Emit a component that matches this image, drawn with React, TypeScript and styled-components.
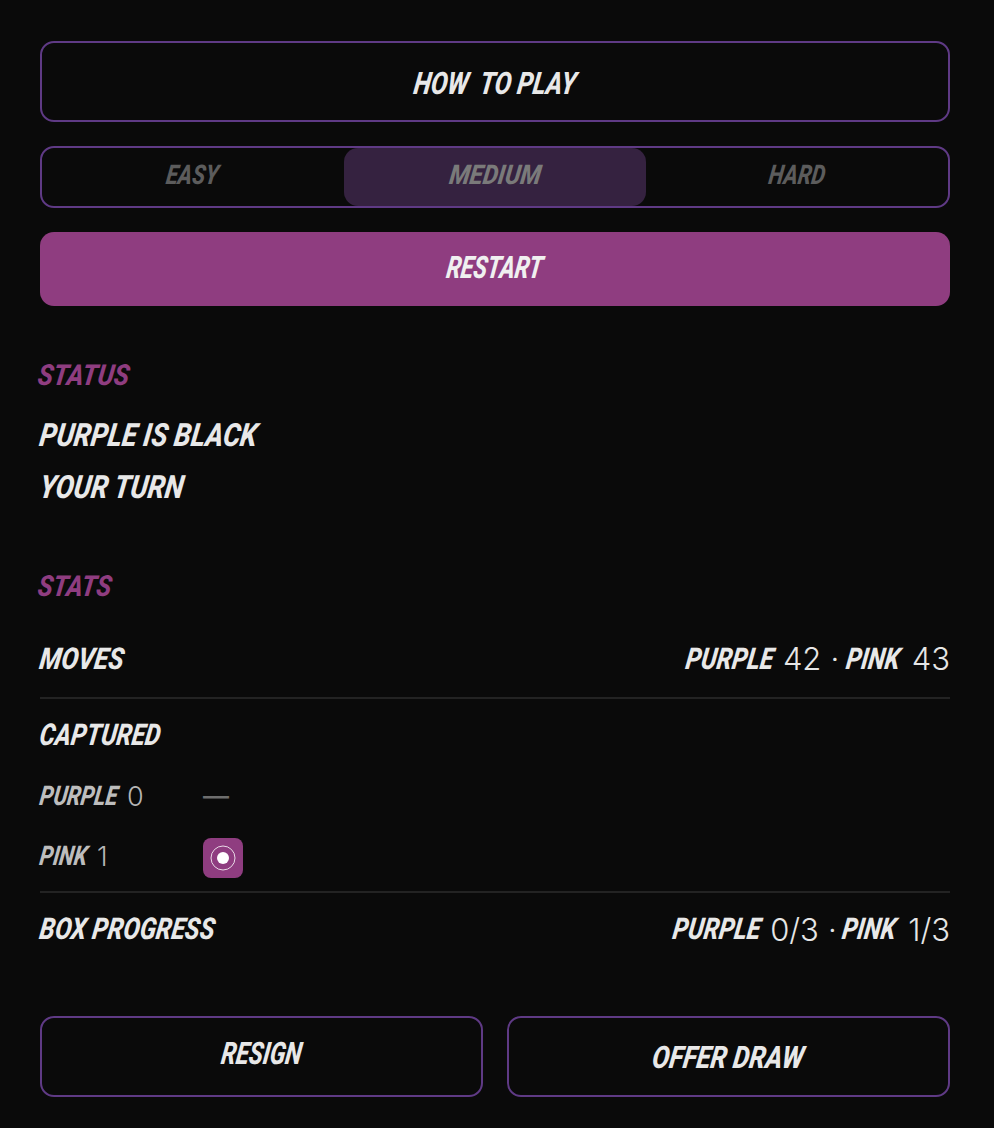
import React from "react";
import styled, { createGlobalStyle } from "styled-components";

const GlobalStyle = createGlobalStyle`
  html, body {
    margin: 0;
    padding: 0;
    background: #0a0a0a;
  }
  * {
    box-sizing: border-box;
  }
`;

const PURPLE_LINE = "#5f3a85";
const PINK = "#8f3d80";

const App: React.FC = () => {
  return (
    <>
      <GlobalStyle />
      <Page>
        <OutlineButton $height={81}>
          <Label $size={31} $squeeze={0.8} $shift={2}>HOW&nbsp; TO PLAY</Label>
        </OutlineButton>

        <Difficulty>
          <DifficultyItem>
            <Label $size={27} $squeeze={0.8} $color="#5c5c5c">EASY</Label>
          </DifficultyItem>
          <DifficultyItem $active>
            <Label $size={27} $squeeze={0.89} $color="#7a7a7a">MEDIUM</Label>
          </DifficultyItem>
          <DifficultyItem>
            <Label $size={27} $squeeze={0.8} $color="#5c5c5c">HARD</Label>
          </DifficultyItem>
        </Difficulty>

        <RestartButton>
          <Label $size={31} $squeeze={0.74} $color="#f0f0f0">RESTART</Label>
        </RestartButton>

        <SectionTitle $top={49}>
          <Label $size={29} $squeeze={0.875} $color={PINK} $left>STATUS</Label>
        </SectionTitle>
        <StatusLine $top={22}>
          <Label $size={32} $squeeze={0.845} $left>PURPLE IS BLACK</Label>
        </StatusLine>
        <StatusLine $top={16}>
          <Label $size={32} $squeeze={0.847} $left>YOUR TURN</Label>
        </StatusLine>

        <SectionTitle $top={61}>
          <Label $size={29} $squeeze={0.86} $color={PINK} $left>STATS</Label>
        </SectionTitle>

        <StatRow $height={77} $top={14}>
          <Label $size={30} $squeeze={0.85} $left>MOVES</Label>
          <Score>
            <Label $size={30} $squeeze={0.81}>PURPLE</Label>
            <Num $pull={-1}>42</Num>
            <Dot $after={1}>·</Dot>
            <Label $size={30} $squeeze={0.8}>PINK</Label>
            <Num $pull={5}>43</Num>
          </Score>
        </StatRow>
        <Divider />

        <CapturedHead>
          <Label $size={30} $squeeze={0.81} $left>CAPTURED</Label>
        </CapturedHead>
        <CapturedRow>
          <CapturedName>
            <Label $size={27} $squeeze={0.8} $color="#bdbdbd" $left>PURPLE</Label>
            <SmallNum $pull={-10}>0</SmallNum>
          </CapturedName>
          <Dash>—</Dash>
        </CapturedRow>
        <CapturedRow>
          <CapturedName>
            <Label $size={27} $squeeze={0.79} $color="#bdbdbd" $left>PINK</Label>
            <SmallNum $pull={-3}>1</SmallNum>
          </CapturedName>
          <PieceChip>
            <svg width="28" height="28" viewBox="0 0 28 28" fill="none">
              <circle cx="14" cy="14" r="12" stroke="#fff" strokeOpacity="0.8" strokeWidth="1" />
              <circle cx="14" cy="14" r="6" fill="#fff" />
            </svg>
          </PieceChip>
        </CapturedRow>
        <Divider $top={5} />

        <StatRow $height={72}>
          <Label $size={30} $squeeze={0.82} $left>BOX PROGRESS</Label>
          <Score>
            <Label $size={30} $squeeze={0.81}>PURPLE</Label>
            <Num $pull={-1}>0/3</Num>
            <Dot $after={-1}>·</Dot>
            <Label $size={30} $squeeze={0.8}>PINK</Label>
            <Num $pull={6}>1/3</Num>
          </Score>
        </StatRow>

        <ActionRow>
          <OutlineButton $height={81}>
            <Label $size={31} $squeeze={0.76} $shift={-3}>RESIGN</Label>
          </OutlineButton>
          <OutlineButton $height={81}>
            <Label $size={31} $squeeze={0.83} $shift={1}>OFFER DRAW</Label>
          </OutlineButton>
        </ActionRow>
      </Page>
    </>
  );
};
export default App;

const Page = styled.main`
  width: 994px;
  height: 1128px;
  padding: 41px 44px 0 40px;
  background: #0a0a0a;
  overflow: hidden;
  font-family: "Inter", "Liberation Sans", sans-serif;
`;

const Label = styled.span<{
  $size: number;
  $squeeze: number;
  $color?: string;
  $left?: boolean;
  $shift?: number;
}>`
  display: inline-block;
  font-family: "Roboto", "Liberation Sans", sans-serif;
  font-style: italic;
  font-weight: 800;
  font-size: ${(props) => props.$size}px;
  line-height: 1;
  white-space: nowrap;
  color: ${(props) => props.$color || "#e8e8e8"};
  transform: translateY(${(props) => props.$shift || 0}px) skewX(-8deg)
    scaleX(${(props) => props.$squeeze});
  transform-origin: ${(props) => (props.$left ? "left center" : "center")};
`;

const OutlineButton = styled.div<{ $height: number }>`
  display: flex;
  align-items: center;
  justify-content: center;
  flex: 1;
  height: ${(props) => props.$height}px;
  border: 2px solid ${PURPLE_LINE};
  border-radius: 14px;
`;

const Difficulty = styled.div`
  display: grid;
  grid-template-columns: repeat(3, 1fr);
  height: 62px;
  margin-top: 24px;
  border: 2px solid ${PURPLE_LINE};
  border-radius: 14px;
`;

const DifficultyItem = styled.div<{ $active?: boolean }>`
  display: flex;
  align-items: center;
  justify-content: center;
  padding-bottom: 4px;
  border-radius: 14px;
  background: ${(props) => (props.$active ? "#352240" : "transparent")};
`;

const RestartButton = styled.div`
  display: flex;
  align-items: center;
  justify-content: center;
  height: 74px;
  margin-top: 24px;
  padding-bottom: 4px;
  border-radius: 14px;
  background: ${PINK};
`;

const SectionTitle = styled.h2<{ $top: number }>`
  height: 40px;
  margin: ${(props) => props.$top}px 0 0 -2px;
  display: flex;
  align-items: center;
  font-size: inherit;
  font-weight: inherit;
`;

const StatusLine = styled.div<{ $top: number }>`
  display: flex;
  align-items: center;
  height: 36px;
  margin-top: ${(props) => props.$top}px;
`;

const StatRow = styled.div<{ $height: number; $top?: number }>`
  display: flex;
  align-items: center;
  justify-content: space-between;
  height: ${(props) => props.$height}px;
  margin-top: ${(props) => props.$top || 0}px;
`;

const Score = styled.div`
  display: flex;
  align-items: center;
`;

const Num = styled.span<{ $pull?: number }>`
  margin-left: ${(props) => props.$pull || 0}px;
  font-size: 31px;
  font-weight: 300;
  line-height: 1;
  color: #e6e6e6;
`;

const Dot = styled.span<{ $after: number }>`
  margin: 0 ${(props) => props.$after}px 0 9px;
  font-size: 31px;
  font-weight: 300;
  line-height: 1;
  color: #e6e6e6;
`;

const Divider = styled.hr<{ $top?: number }>`
  height: 2px;
  margin: ${(props) => props.$top || 0}px 0 0;
  border: 0;
  background: #232323;
`;

const CapturedHead = styled.div`
  display: flex;
  align-items: center;
  height: 62px;
  margin-top: 5px;
`;

const CapturedRow = styled.div`
  display: flex;
  align-items: center;
  height: 60px;
`;

const CapturedName = styled.div`
  display: flex;
  align-items: center;
  width: 163px;
`;

const SmallNum = styled.span<{ $pull: number }>`
  margin-left: ${(props) => props.$pull}px;
  font-size: 27px;
  font-weight: 300;
  line-height: 1;
  color: #b5b5b5;
`;

const Dash = styled.span`
  font-size: 26px;
  font-weight: 500;
  line-height: 1;
  color: #6e6e6e;
`;

const PieceChip = styled.div`
  display: flex;
  align-items: center;
  justify-content: center;
  width: 40px;
  height: 40px;
  margin-top: 4px;
  border-radius: 8px;
  background: ${PINK};
`;

const ActionRow = styled.div`
  display: flex;
  gap: 24px;
  margin-top: 51px;
`;
